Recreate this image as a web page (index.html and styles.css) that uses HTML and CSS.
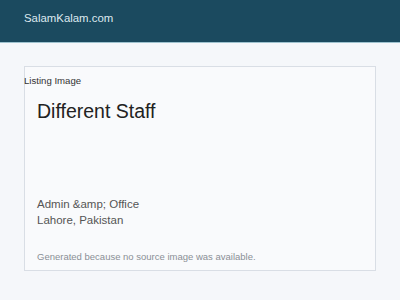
FILE: index.html
```html
<!DOCTYPE html>
<html>
<head>
<meta charset="utf-8">
<link rel="stylesheet" href="styles.css">
</head>
<body>
<header class="site-header">
  <span class="brand">SalamKalam.com</span>
</header>
<main class="main">
  <figure class="listing">
    <div class="label">Listing Image</div>
    <div class="content">
      <h1 class="title">Different Staff</h1>
      <div class="meta">
        <div>Admin &amp;amp; Office</div>
        <div>Lahore, Pakistan</div>
      </div>
      <p class="note">Generated because no source image was available.</p>
    </div>
  </figure>
</main>
</body>
</html>
```
FILE: styles.css
```css
html, body {
  margin: 0;
  padding: 0;
}
body {
  background: #f5f7fa;
  font-family: "Liberation Sans", Arial, sans-serif;
  width: 400px;
  height: 300px;
  overflow: hidden;
}
.site-header {
  height: 42px;
  background: #1b4a5f;
  border-bottom: 1px solid #9fc3cf;
  display: flex;
  align-items: center;
  padding: 0 24px;
  box-sizing: content-box;
}
.brand {
  color: #dde9ef;
  font-size: 11.4px;
  margin-top: -6px;
}
.main {
  padding: 23px 24px 0;
}
.listing {
  margin: 0;
  height: 205px;
  border: 1px solid #d9dee5;
  background: #f9fafc;
  display: flex;
  flex-direction: column;
  box-sizing: border-box;
}
.label {
  font-size: 9.6px;
  line-height: 12px;
  color: #333;
  margin-top: 8px;
  margin-left: -1px;
}
.content {
  flex: 1;
  display: flex;
  flex-direction: column;
  padding: 0 12px 8px;
}
.title {
  margin: 13px 0 0;
  font-size: 19.5px;
  font-weight: normal;
  color: #222;
}
.meta {
  margin-top: auto;
  font-size: 11.5px;
  line-height: 16px;
  color: #555;
}
.note {
  margin: 23px 0 0;
  font-size: 9.5px;
  color: #8a8f96;
}
```
